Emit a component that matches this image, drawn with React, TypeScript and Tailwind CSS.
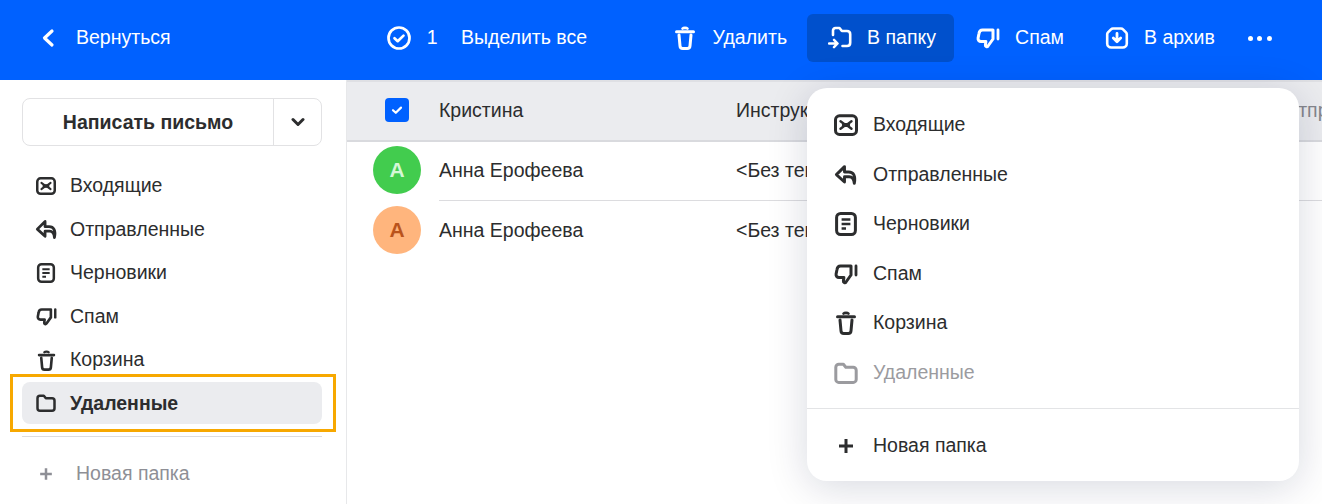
const Svg = ({ size, children, className = "" }: { size: number; children: React.ReactNode; className?: string }) => (
  <svg width={size} height={size} viewBox="0 0 24 24" fill="none" stroke="currentColor" strokeWidth={3} strokeLinecap="round" strokeLinejoin="round" className={`shrink-0 ${className}`}>
    {children}
  </svg>
);

type I = { size?: number; className?: string };
const Inbox = ({ size = 24, className }: I) => (
  <Svg size={size} className={className}>
    <rect x="1.5" y="2.8" width="21" height="18.6" rx="4" />
    <path d="M6.5 8.2l4 3h3l4-3M6.5 15.8l4-3h3l4 3" strokeWidth={2.4} />
    <path d="M9.5 12h5" strokeWidth={3.4} />
  </Svg>
);
const Sent = ({ size = 24, className }: I) => (
  <Svg size={size} className={className}>
    <path d="M10.5 3.6L2.4 11.6l8.100 7.400v-5.200h4.600c3 0 4.800 2.400 5.200 6.600 1.600-7.600-.8-11.400-5.600-11.400h-4.200z" strokeWidth={2.9} />
  </Svg>
);
const Draft = ({ size = 24, className }: I) => (
  <Svg size={size} className={className}>
    <rect x="2.6" y="1.5" width="18.8" height="21" rx="4" />
    <path d="M7.6 7.5h8.8M7.6 12h8.8M7.6 16.5h4.4" strokeWidth={2.4} strokeLinecap="butt" />
  </Svg>
);
const Spam = ({ size = 24, className }: I) => (
  <Svg size={size} className={className}>
    <path d="M6.5 4H17v9l-5 7c-.9 1.2-2.8.5-2.6-1l.5-3.500H5c-2 0-3.200-1.600-2.900-3.500L3 7.500C3.300 5.300 4.600 4 6.500 4z" strokeWidth={3} />
    <path d="M22 4v9" strokeWidth={2.8} />
  </Svg>
);
const Trash = ({ size = 24, className }: I) => (
  <Svg size={size} className={className}>
    <path d="M3.5 5.8h17" />
    <path d="M9.5 2.600c1-1 4-1 5 0" strokeWidth={2.6} />
    <path d="M6 9l1 10.800c.1 1.600 1.200 2.600 2.800 2.600h4.400c1.600 0 2.700-1 2.800-2.600L18 9" />
  </Svg>
);
const Folder = ({ size = 24, className }: I) => (
  <Svg size={size} className={className}>
    <path d="M1.8 6.2a3 3 0 0 1 3-3h4.600l2.400 3h7.400a3 3 0 0 1 3 3v9.200a3 3 0 0 1-3 3H4.800a3 3 0 0 1-3-3z" />
  </Svg>
);
const Plus = ({ size = 24, className }: I) => (
  <Svg size={size} className={className}>
    <path d="M12 5v14M5 12h14" strokeLinecap="butt" />
  </Svg>
);
const MoveFolder = ({ size = 24, className }: I) => (
  <Svg size={size} className={className}>
    <path d="M5 9V4.500C5 3.400 5.800 2 7.500 2h4l2.400 3H19c2 0 3.200 1.400 3.200 3.200v8.600c0 1.900-1.300 3.200-3.200 3.200h-4.500" strokeWidth={2.6} />
    <path d="M1 17.500h8M6 13.800l3.600 3.700L6 21.200" strokeWidth={2.4} />
  </Svg>
);
const Archive = ({ size = 24, className }: I) => (
  <Svg size={size} className={className}>
    <path d="M8 2.500h8c.8 0 1.500.3 2 .8l3 3c.5.5.8 1.200.8 2v9.200a4 4 0 0 1-4 4H6.200a4 4 0 0 1-4-4V8.300c0-.8.3-1.500.8-2l3-3c.5-.5 1.200-.8 2-.8z" strokeWidth={2.6} />
    <path d="M12 7.500v8M8.300 12l3.700 3.700 3.700-3.700" strokeWidth={2.8} />
  </Svg>
);

const Row = ({ icon, label, short }: { icon: React.ReactNode; label: string; short?: boolean }) => (
  <div className={`flex items-center pl-[14px] ${short ? "h-[43px]" : "h-11"}`}>
    <div className="flex w-5 shrink-0 justify-center">{icon}</div>
    <span className="ml-[14px]">{label}</span>
  </div>
);

const MenuRow = ({ icon, label, muted, short }: { icon: React.ReactNode; label: string; muted?: boolean; short?: boolean }) => (
  <div className={`flex items-center gap-[15px] pl-[27px] ${short ? "h-[49px]" : "h-[50px]"} ${muted ? "text-[#9b9b9f]" : ""}`}>
    {icon}
    <span>{label}</span>
  </div>
);

const Person = ({ bg, fg, last }: { bg: string; fg: string; last?: boolean }) => (
  <div className="flex h-[60px] items-center pl-[26px]">
    <div className={`flex h-12 w-12 shrink-0 items-center justify-center rounded-full text-[21px] font-bold ${bg} ${fg}`}>A</div>
    <div className={`ml-[18px] flex h-full flex-1 items-center pt-[2px] ${last ? "" : "shadow-[0_1px_0_#dcdcdf]"}`}>
      <span className="w-[297px]">Анна Ерофеева</span>
      <span>{"<Без темы>"}</span>
    </div>
  </div>
);

export default function App() {
  return (
    <div className="relative h-[504px] w-[1322px] overflow-hidden bg-white font-['Liberation_Sans',Arial,sans-serif] text-[19.5px] text-[#2c2d2e]">
      <header className="flex h-20 items-center bg-[#0061ff] pb-1 text-white">
        <svg width="14" height="24" viewBox="0 0 14 24" fill="none" stroke="currentColor" strokeWidth={3.2} strokeLinecap="round" strokeLinejoin="round" className="ml-[41px]">
          <path d="M11 5L3.500 12l7.500 7" />
        </svg>
        <span className="ml-[21px]">Вернуться</span>
        <svg width="24" height="24" viewBox="0 0 24 24" fill="none" stroke="currentColor" strokeWidth={2.7} strokeLinecap="round" strokeLinejoin="round" className="ml-[216px]">
          <circle cx="12" cy="12" r="10.500" />
          <path d="M7.500 12.200l3.200 3 5.800-5.600" />
        </svg>
        <span className="ml-[16px]">1</span>
        <span className="ml-[23.5px]">Выделить все</span>
        <Trash size={24} className="ml-[86px]" />
        <span className="ml-[15.5px]">Удалить</span>
        <div className="ml-5 flex h-12 w-[147px] items-center gap-[15px] rounded-md bg-[#0050cc] pl-[21px]">
          <MoveFolder />
          <span>В папку</span>
        </div>
        <Spam className="ml-[22px]" />
        <span className="ml-[15px]">Спам</span>
        <Archive className="ml-[41px]" />
        <span className="ml-[15px]">В архив</span>
        <div className="ml-[33px] flex items-center gap-[4.5px]">
          <span className="h-[5px] w-[5px] rounded-full bg-white" />
          <span className="h-[5px] w-[5px] rounded-full bg-white" />
          <span className="h-[5px] w-[5px] rounded-full bg-white" />
        </div>
      </header>

      <div className="flex h-[424px]">
        <aside className="w-[347px] shrink-0 border-r border-[#e7e8ea] pl-[22px] pr-6 pt-[18px]">
          <div className="flex h-12 rounded-lg border border-[#e2e2e4]">
            <div className="flex w-[251px] items-center justify-center border-r border-[#e2e2e4] pt-px font-bold">Написать письмо</div>
            <div className="flex flex-1 items-center justify-center">
              <svg width="14" height="10" viewBox="0 0 14 10" fill="none" stroke="currentColor" strokeWidth={3} strokeLinecap="round" strokeLinejoin="round">
                <path d="M2 2.500l5 5 5-5" />
              </svg>
            </div>
          </div>
          <div className="mt-[18px]">
            <Row icon={<Inbox size={20} />} label="Входящие" />
            <Row icon={<Sent size={23} />} label="Отправленные" short />
            <Row icon={<Draft size={20} />} label="Черновики" />
            <Row icon={<Spam size={21} />} label="Спам" short />
            <Row icon={<Trash size={21} />} label="Корзина" />
            <div className="relative flex h-[42px] items-center gap-[14px] rounded-lg bg-[#ebecef] pl-[14px] font-bold">
              <Folder size={20} />
              <span className="pt-px">Удаленные</span>
              <div className="absolute -left-3 -right-[14px] -top-2 -bottom-2 border-[3px] border-[#f7a800]" />
            </div>
          </div>
          <div className="mt-3 border-t border-[#dcdcdf]" />
          <div className="mt-[15px] flex h-[44px] items-center pl-[14px] text-[#8e8f96]">
            <Plus size={20} className="-mt-px" />
            <span className="ml-5">Новая папка</span>
          </div>
        </aside>

        <main className="min-w-0 flex-1">
          <div className="-mb-[2px] flex h-[62px] items-center border-y-2 border-t-[#dfe0e4] border-b-[#d9dade] bg-[#ebecef] pl-[38px]">
            <div className="-mt-[2px] flex h-6 w-6 shrink-0 items-center justify-center rounded bg-[#0061ff] text-white">
              <svg width="14" height="14" viewBox="0 0 14 14" fill="none" stroke="currentColor" strokeWidth={2.2} strokeLinecap="round" strokeLinejoin="round">
                <path d="M3 7.200l2.800 2.600L11 4.600" />
              </svg>
            </div>
            <span className="ml-[30px] w-[297px] shrink-0">Кристина</span>
            <span className="w-[547px] shrink-0">Инструкция</span>
            <span className="whitespace-nowrap text-[#85868c]">Отправлено</span>
          </div>
          <Person bg="bg-[#42cc4e]" fg="text-[#d5f7d6]" />
          <Person bg="bg-[#ffb57d]" fg="text-[#b9531c]" last />
        </main>
      </div>

      <div className="absolute left-[807px] top-[88px] h-[393px] w-[492px] rounded-[20px] bg-white pt-3 shadow-[0_6px_40px_rgba(0,16,61,0.16)]">
        <MenuRow icon={<Inbox />} label="Входящие" />
        <MenuRow icon={<Sent />} label="Отправленные" short />
        <MenuRow icon={<Draft />} label="Черновики" />
        <MenuRow icon={<Spam />} label="Спам" short />
        <MenuRow icon={<Trash />} label="Корзина" />
        <MenuRow icon={<Folder />} label="Удаленные" muted />
        <div className="mt-[10px] border-t border-[#e3e4e6]" />
        <div className="mt-3">
          <MenuRow icon={<Plus />} label="Новая папка" />
        </div>
      </div>
    </div>
  );
}
